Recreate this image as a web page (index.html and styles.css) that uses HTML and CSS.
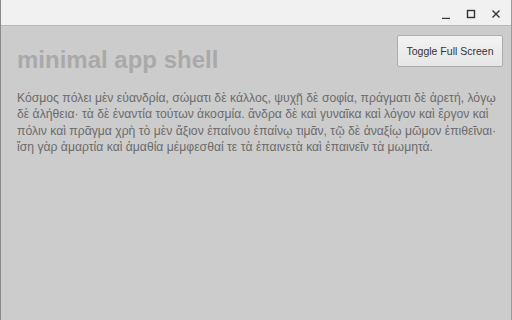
FILE: index.html
```html
<!DOCTYPE html>
<html>
<head>
<meta charset="utf-8">
<link rel="stylesheet" href="styles.css">
</head>
<body>
<div class="window">
  <div class="titlebar">
    <div class="controls">
      <span class="ctl"><svg width="10" height="10" viewBox="0 0 10 10"><path d="M1 9.5H9" stroke="#333" stroke-width="1.4"/></svg></span>
      <span class="ctl"><svg width="10" height="10" viewBox="0 0 10 10"><rect x="1.5" y="1.5" width="7" height="7" fill="none" stroke="#333" stroke-width="1.4"/></svg></span>
      <span class="ctl"><svg width="10" height="10" viewBox="0 0 10 10"><path d="M1.5 1.5L8.5 8.5M8.5 1.5L1.5 8.5" stroke="#333" stroke-width="1.4"/></svg></span>
    </div>
  </div>
  <div class="content">
    <div class="header">
      <h1 class="title">minimal app shell</h1>
      <button class="toggle">Toggle Full Screen</button>
    </div>
    <p class="text">Κόσμος πόλει μὲν εὐανδρία, σώματι δὲ κάλλος, ψυχῇ δὲ σοφία, πράγματι δὲ ἀρετή, λόγῳ<br>δὲ ἀλήθεια· τὰ δὲ ἐναντία τούτων ἀκοσμία. ἄνδρα δὲ καὶ γυναῖκα καὶ λόγον καὶ ἔργον καὶ<br>πόλιν καὶ πρᾶγμα χρὴ τὸ μὲν ἄξιον ἐπαίνου ἐπαίνῳ τιμᾶν, τῷ δὲ ἀναξίῳ μῶμον ἐπιθεῖναι·<br>ἴση γὰρ ἁμαρτία καὶ ἀμαθία μέμφεσθαί τε τὰ ἐπαινετὰ καὶ ἐπαινεῖν τὰ μωμητά.</p>
  </div>
</div>
</body>
</html>
```
FILE: styles.css
```css
html, body {
  margin: 0;
  padding: 0;
  width: 512px;
  height: 320px;
  overflow: hidden;
}
body {
  font-family: "Liberation Sans", Arial, sans-serif;
}
.window {
  box-sizing: border-box;
  width: 512px;
  height: 320px;
  display: flex;
  flex-direction: column;
  border-left: 1px solid #8a8a8a;
  border-right: 1px solid #9a9a9a;
  background: #cccccc;
}
.titlebar {
  height: 25px;
  background: #f1f1f1;
  border-bottom: 1px solid #b8b8b8;
  display: flex;
  justify-content: flex-end;
  align-items: flex-start;
}
.controls {
  display: flex;
  gap: 15px;
  padding: 9px 10px 0 0;
}
.ctl {
  width: 10px;
  height: 10px;
  display: block;
}
.ctl svg {
  display: block;
}
.content {
  flex: 1;
  padding: 0 8px 0 16px;
}
.header {
  display: flex;
  justify-content: space-between;
  align-items: flex-start;
}
.title {
  margin: 20px 0 0 0;
  font-size: 24px;
  font-weight: bold;
  color: #a9a9a9;
  line-height: 28px;
}
.toggle {
  margin: 9px 0 0 0;
  width: 106px;
  height: 32px;
  border: 1px solid #adadad;
  border-radius: 2px;
  background: linear-gradient(#f3f3f3, #e6e6e6);
  color: #333;
  font-family: "Liberation Sans", Arial, sans-serif;
  font-size: 10.5px;
  padding: 0;
}
.text {
  margin: 16px 0 0 0;
  font-size: 12.2px;
  line-height: 16.3px;
  color: #6b6b6b;
  white-space: nowrap;
}
```
